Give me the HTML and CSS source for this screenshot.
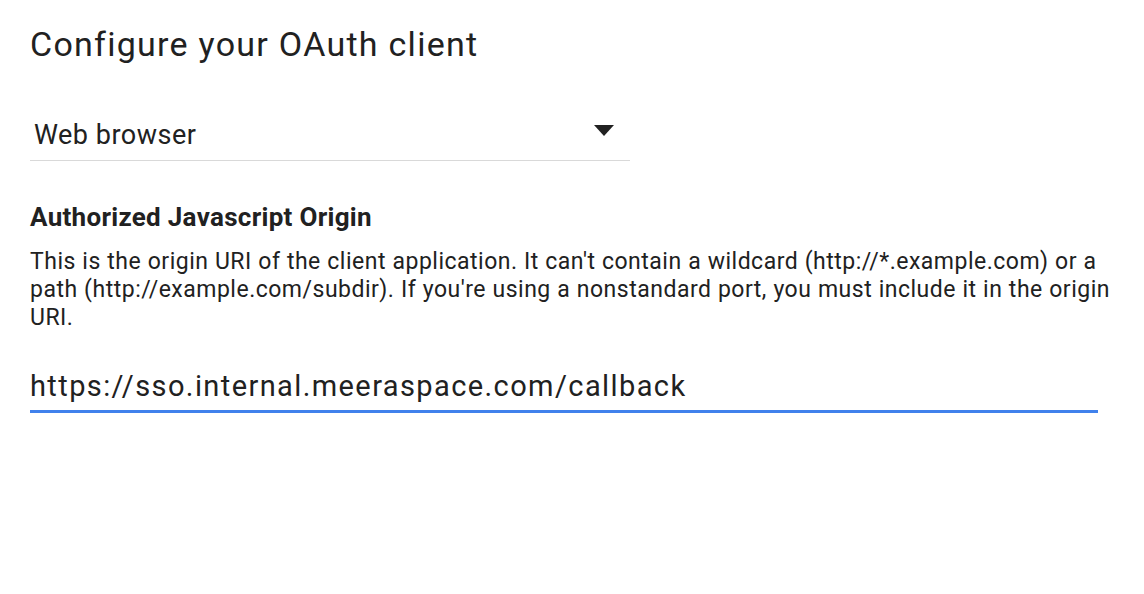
FILE: index.html
```html
<!DOCTYPE html>
<html>
<head>
<meta charset="utf-8">
<link rel="stylesheet" href="styles.css">
</head>
<body>
<div class="page">
  <h1 class="title">Configure your OAuth client</h1>
  <div class="select">
    <span class="select-value">Web browser</span>
    <svg class="caret" width="20" height="11" viewBox="0 0 20 11"><path d="M0 0 L20 0 L10 11 Z" fill="#212121"/></svg>
  </div>
  <h2 class="label">Authorized Javascript Origin</h2>
  <p class="help">This is the origin URI of the client application. It can't contain a wildcard (http://*.example.com) or a path (http://example.com/subdir). If you're using a nonstandard port, you must include it in the origin URI.</p>
  <div class="input">https://sso.internal.meeraspace.com/callback</div>
</div>
</body>
</html>
```
FILE: styles.css
```css
* { box-sizing: border-box; }
html, body { margin: 0; padding: 0; background: #fff; }
body { font-family: Roboto, "Noto Sans", sans-serif; color: #212121; }
.page { padding: 22px 46px 0 30px; }
.title { margin: 0; font-size: 34px; font-weight: 400; line-height: 44px; letter-spacing: 1.27px; }
.select { width: 600px; margin-top: 40px; display: flex; align-items: flex-start; justify-content: space-between; padding: 14px 16px 10px 4px; border-bottom: 1px solid #d9d9d9; }
.select-value { font-size: 27px; line-height: 30px; letter-spacing: 0.5px; }
.caret { display: block; margin-top: 5px; }
.label { margin: 41px 0 0; font-size: 26px; font-weight: 700; line-height: 30px; letter-spacing: 0.3px; }
.help { margin: 16px -22px 0 0; font-size: 23px; line-height: 28px; letter-spacing: 0.5px; word-spacing: 0.3px; }
.input { margin-top: 34px; font-size: 29px; line-height: 40px; letter-spacing: 1.4px; padding-bottom: 4px; border-bottom: 3px solid #4081ec; width: 1068px; }
```
